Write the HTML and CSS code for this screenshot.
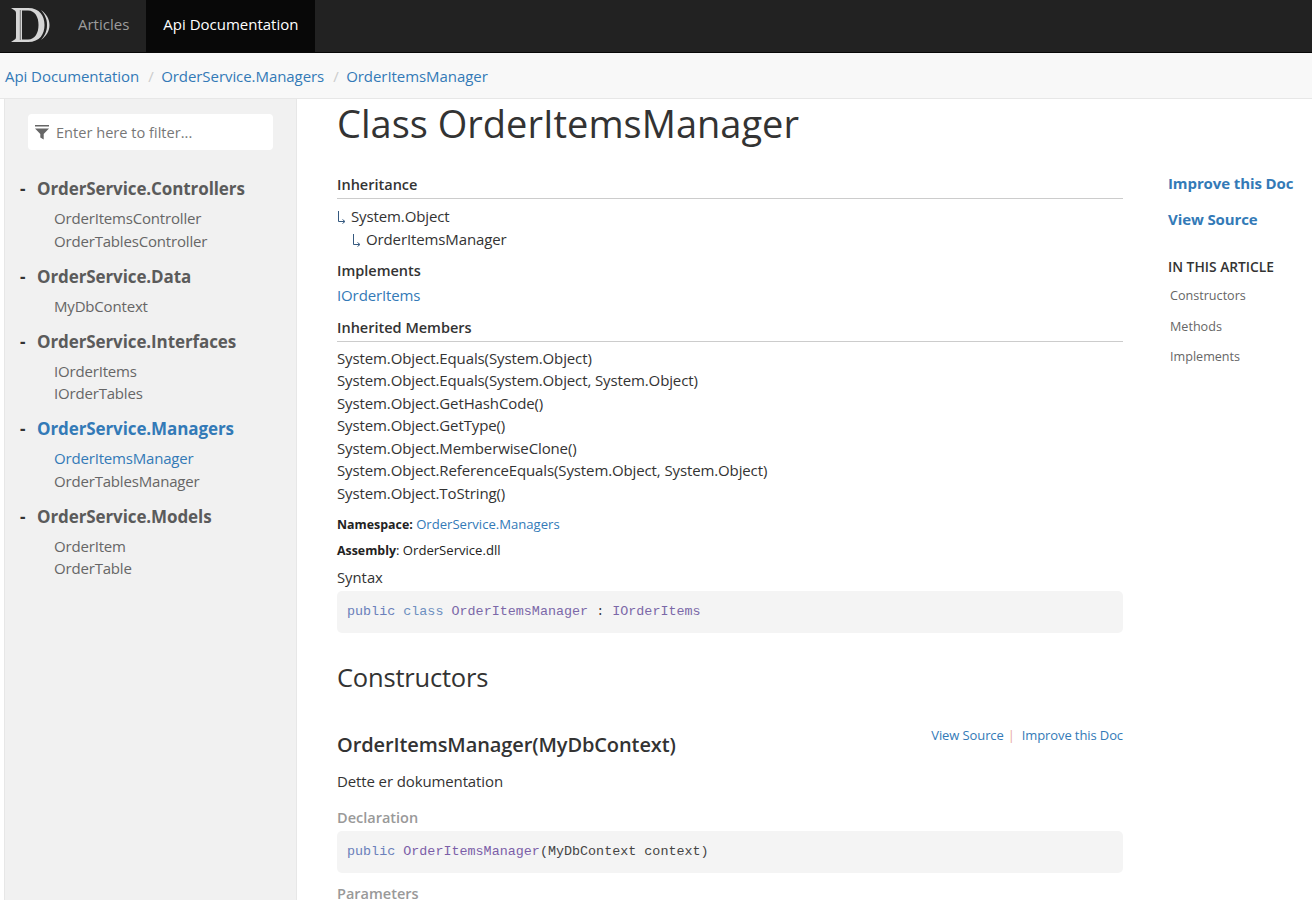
FILE: index.html
```html
<!DOCTYPE html>
<html lang="en">
<head>
<meta charset="utf-8">
<title>Class OrderItemsManager</title>
<link rel="stylesheet" href="styles.css">
</head>
<body>
<header class="topbar">
  <a class="brand" href="#" aria-label="Home">
    <svg width="40" height="36" viewBox="0 0 40 36" class="logo">
      <path d="M0 1 H17 C29 1 33.500 9 33.500 18 C33.500 27 29 35 17 35 H0 L3 33 C5 32 5 31 5 29 V7 C5 5 5 4 3 3 Z" fill="#d6d6d6"/>
      <path d="M11 3.500 V32.500 H17 C24 32.500 27.500 26 27.500 18 C27.500 10 24 3.500 17 3.500 Z" fill="#222"/>
      <path d="M8.800 3 H9.800 V33 H8.800 Z" fill="#777"/>
      <path d="M30 3 C35.500 7 38.500 12 38.500 18 C38.500 24 35.500 29 30 33 C34 28 36 24 36 18 C36 12 34 8 30 3 Z" fill="#d6d6d6"/>
    </svg>
  </a>
  <nav class="topnav">
    <a href="#" class="topnav-link">Articles</a>
    <a href="#" class="topnav-link active">Api Documentation</a>
  </nav>
</header>
<div class="subnav">
  <a href="#">Api Documentation</a><span class="sep">/</span><a href="#">OrderService.Managers</a><span class="sep">/</span><a href="#">OrderItemsManager</a>
</div>
<div class="layout">
  <aside class="sidebar">
    <div class="filter">
      <svg class="filter-icon" width="14" height="15" viewBox="0 0 14 15"><path d="M0 0H14V1.500H0Z M0 3.500H14L8.700 9V14.500L5.300 12.500V9Z" fill="#666"/></svg>
      <span>Enter here to filter...</span>
    </div>
    <ul class="toc">
      <li><a class="ns" href="#"><span class="dash">-</span>OrderService.Controllers</a>
        <a class="leaf" href="#">OrderItemsController</a><a class="leaf" href="#">OrderTablesController</a></li>
      <li><a class="ns" href="#"><span class="dash">-</span>OrderService.Data</a>
        <a class="leaf" href="#">MyDbContext</a></li>
      <li><a class="ns" href="#"><span class="dash">-</span>OrderService.Interfaces</a>
        <a class="leaf" href="#">IOrderItems</a><a class="leaf" href="#">IOrderTables</a></li>
      <li><a class="ns current" href="#"><span class="dash">-</span>OrderService.Managers</a>
        <a class="leaf current" href="#">OrderItemsManager</a><a class="leaf" href="#">OrderTablesManager</a></li>
      <li><a class="ns" href="#"><span class="dash">-</span>OrderService.Models</a>
        <a class="leaf" href="#">OrderItem</a><a class="leaf" href="#">OrderTable</a></li>
    </ul>
  </aside>
  <main class="article">
    <h1>Class OrderItemsManager</h1>
    <h5 class="ruled first">Inheritance</h5>
    <div class="line"><svg class="arrow" width="10" height="14" viewBox="0 0 10 14"><path d="M1.500 1V11.500H7.500M5.500 9.500L8 11.500L5.500 13.500" fill="none" stroke="#35597f" stroke-width="1"/></svg>System.Object</div>
    <div class="line indent"><svg class="arrow" width="10" height="14" viewBox="0 0 10 14"><path d="M1.500 1V11.500H7.500M5.500 9.500L8 11.500L5.500 13.500" fill="none" stroke="#35597f" stroke-width="1"/></svg>OrderItemsManager</div>
    <h5 class="plain">Implements</h5>
    <div class="line"><a href="#">IOrderItems</a></div>
    <h5 class="ruled">Inherited Members</h5>
    <div class="members">
      <div class="line">System.Object.Equals(System.Object)</div>
      <div class="line">System.Object.Equals(System.Object, System.Object)</div>
      <div class="line">System.Object.GetHashCode()</div>
      <div class="line">System.Object.GetType()</div>
      <div class="line">System.Object.MemberwiseClone()</div>
      <div class="line">System.Object.ReferenceEquals(System.Object, System.Object)</div>
      <div class="line">System.Object.ToString()</div>
    </div>
    <div class="meta first-meta"><strong>Namespace:</strong> <a href="#">OrderService.Managers</a></div>
    <div class="meta"><strong>Assembly</strong>: OrderService.dll</div>
    <h5 class="syntax">Syntax</h5>
    <pre class="code"><span class="kw1">public</span> <span class="kw2">class</span> <span class="ty">OrderItemsManager</span> : <span class="ty">IOrderItems</span></pre>
    <h2>Constructors</h2>
    <div class="member-head">
      <h3>OrderItemsManager(MyDbContext)</h3>
      <div class="links"><a href="#">View Source</a><span class="bar">|</span><a href="#">Improve this Doc</a></div>
    </div>
    <p class="summary">Dette er dokumentation</p>
    <h5 class="decl">Declaration</h5>
    <pre class="code"><span class="kw1">public</span> <span class="ty2">OrderItemsManager</span>(MyDbContext context)</pre>
    <h5 class="decl params">Parameters</h5>
  </main>
  <aside class="affix">
    <a class="side-link" href="#">Improve this Doc</a>
    <a class="side-link" href="#">View Source</a>
    <h5 class="affix-title">IN THIS ARTICLE</h5>
    <a class="affix-link" href="#">Constructors</a>
    <a class="affix-link" href="#">Methods</a>
    <a class="affix-link" href="#">Implements</a>
  </aside>
</div>
</body>
</html>
```
FILE: styles.css
```css
* { box-sizing: border-box; }
html, body { margin: 0; height: 100%; overflow: hidden; }
body {
  font-family: "Open Sans", "Noto Sans", sans-serif;
  font-size: 15px;
  color: #333;
  background: #fff;
  letter-spacing: -0.12px;
}
a { color: #337ab7; text-decoration: none; }

.topbar {
  display: flex;
  height: 53px;
  background: #222;
  border-bottom: 1px solid #080808;
}
.brand { width: 61px; padding: 7px 0 0 11px; display: block; }
.logo { display: block; }
.topnav { display: flex; }
.topnav-link {
  padding: 0 17px;
  line-height: 48px;
  color: #9d9d9d;
  letter-spacing: 0;
}
.topnav-link.active { background: #080808; color: #fff; }

.subnav {
  height: 46px;
  padding-left: 5px;
  background: #f8f8f8;
  border-bottom: 1px solid #e7e7e7;
  line-height: 46px;
  white-space: nowrap;
  letter-spacing: -0.06px;
}
.sep { color: #ccc; padding: 0 7.500px 0 9px; }

.layout { display: flex; height: 801px; }

.sidebar {
  width: 293px;
  margin-left: 4px;
  flex: none;
  background: #f1f1f1;
  border-left: 1px solid #e7e7e7;
  border-right: 1px solid #e7e7e7;
  padding: 15px 0 0 23px;
}
.filter {
  display: flex;
  align-items: center;
  width: 245px;
  height: 36px;
  background: #fff;
  border-radius: 4px;
  padding-left: 7px;
  color: #777;
  gap: 7px;
  font-size: 14.600px;
  letter-spacing: 0;
}
.filter-icon { flex: none; }
.toc { list-style: none; margin: 25.300px 0 0; padding: 0; }
.toc li { margin-left: -8px; margin-bottom: 10.500px; }
.ns {
  display: block;
  font-weight: 700;
  font-size: 17px;
  line-height: 28px;
  color: #5b5b5b;
  letter-spacing: -0.1px;
}
.dash { display: inline-block; width: 17px; color: #333; }
.leaf {
  display: block;
  margin-left: 34px;
  line-height: 22.500px;
  color: #666;
  letter-spacing: -0.18px;
}
.ns + .leaf { margin-top: 4px; }
.ns.current, .leaf.current { color: #337ab7; }

.article { width: 786px; margin-left: 40px; flex: none; }
h1 {
  font-size: 38px;
  font-weight: 400;
  line-height: 48px;
  margin: 0;
  letter-spacing: 0;
}
h5 {
  font-size: 14.500px;
  font-weight: 600;
  margin: 0;
  line-height: 20px;
  letter-spacing: 0;
}
.ruled {
  border-bottom: 1px solid #ccc;
  padding-bottom: 3px;
  margin: 11px 0 5px;
}
.ruled.first { margin-top: 28px; margin-bottom: 6px; padding-bottom: 3px; }
.plain { margin: 11px 0 3px; }
.line { line-height: 22.500px; }
.members .line { line-height: 22.600px; }
.indent { padding-left: 15px; }
.arrow { vertical-align: -2px; margin-right: 4px; }
.meta { font-size: 13.100px; line-height: 18px; margin-top: 7px; color: #222; letter-spacing: 0; }
.first-meta { margin-top: 10px; }
.meta strong { font-weight: 700; font-size: 12.400px; }
.syntax { margin-top: 7px; margin-bottom: 4px; font-weight: 500; font-size: 14.800px; color: #333; }
.code {
  margin: 0;
  height: 42px;
  background: #f4f4f4;
  border-radius: 5px;
  padding: 0 10px;
  font-family: "Liberation Mono", monospace;
  font-size: 13.400px;
  line-height: 41px;
  letter-spacing: 0;
  color: #444;
}
.kw1 { color: #6b80bb; }
.kw2 { color: #6d8fc0; }
.ty { color: #7b68a8; }
.ty2 { color: #7b5ea8; }
h2 {
  font-size: 25.500px;
  font-weight: 400;
  line-height: 32px;
  margin: 28px 0 0;
  letter-spacing: -0.2px;
}
.member-head {
  display: flex;
  justify-content: space-between;
  align-items: flex-start;
  margin-top: 38px;
}
h3 {
  font-size: 20px;
  font-weight: 600;
  line-height: 28px;
  margin: 0;
  color: #333;
  letter-spacing: -0.1px;
}
.links { font-size: 13px; line-height: 18px; margin-top: -5px; letter-spacing: -0.1px; }
.bar { color: #e9a99a; padding: 0 7px 0 4px; }
.summary { margin: 11px 0 0; line-height: 22px; }
.decl { color: #999; margin-top: 16px; margin-bottom: 3px; }
.params { margin-top: 11px; }

.affix { margin-left: 45px; flex: none; padding-top: 73px; width: 140px; white-space: nowrap; }
.side-link {
  display: block;
  font-weight: 700;
  line-height: 22px;
  margin-bottom: 14px;
  letter-spacing: -0.1px;
}
.affix-title { font-size: 13.800px; line-height: 18px; margin: 28px 0 11px; color: #333; }
.affix-link {
  display: block;
  font-size: 12.600px;
  letter-spacing: 0;
  line-height: 18px;
  color: #666;
  padding-left: 2px;
  margin-bottom: 12.500px;
}
```
